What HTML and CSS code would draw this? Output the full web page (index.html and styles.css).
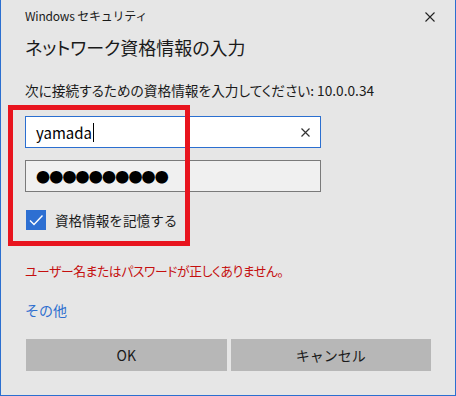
FILE: index.html
```html
<!DOCTYPE html>
<html lang="ja">
<head>
    <meta charset="UTF-8">
    <title>Windows セキュリティ</title>
    <link rel="stylesheet" href="styles.css">
</head>
<body>
    <div class="window">
        <div class="title-bar">
            <span class="title">Windows セキュリティ</span>
            <span class="close">
                <svg viewBox="0 0 10 10"><path d="M0.5 0.5L9.5 9.5M9.5 0.5L0.5 9.5"></path></svg>
            </span>
        </div>

        <h1>ネットワーク資格情報の入力</h1>
        <p class="prompt">次に接続するための資格情報を入力してください: 10.0.0.34</p>

        <div class="field focused">
            <span class="value">yamada</span><span class="caret"></span>
            <span class="clear">
                <svg viewBox="0 0 9 9"><path d="M0.5 0.5L8.5 8.5M8.5 0.5L0.5 8.5"></path></svg>
            </span>
        </div>
        <div class="field password">
            <span class="dots">●●●●●●●●●●</span>
        </div>

        <label class="remember">
            <span class="checkbox">
                <svg viewBox="0 0 20 20"><path d="M4 10.5L8 14.5L16.5 5.5"></path></svg>
            </span>
            資格情報を記憶する
        </label>

        <p class="error">ユーザー名またはパスワードが正しくありません。</p>
        <a class="more" href="#">その他</a>

        <div class="buttons">
            <button type="button">OK</button>
            <button type="button">キャンセル</button>
        </div>

        <div class="highlight"></div>
    </div>
</body>
</html>
```

FILE: styles.css
```css
body {
    margin: 0;
    font-family: "Noto Sans CJK JP", sans-serif;
    color: #000;
}

.window {
    position: relative;
    width: 456px;
    height: 396px;
    box-sizing: border-box;
    background-color: #e6e6e6;
    border: 1px solid #2b6fd0;
    border-top: none;
    padding: 0 24px 0 24px;
}

.title-bar {
    display: flex;
    justify-content: space-between;
    align-items: center;
    height: 32px;
}

.title {
    font-size: 12px;
    color: #1a1a1a;
    margin-top: -2px;
    letter-spacing: -0.2px;
}

.close {
    display: flex;
    margin-right: -4px;
    margin-top: 2px;
}

.close svg {
    width: 10px;
    height: 10px;
    stroke: #222;
    stroke-width: 1.1;
}

h1 {
    margin: 1px 0 0 0;
    font-size: 18px;
    font-weight: normal;
    line-height: 28px;
    color: #1a1a1a;
    font-feature-settings: "palt";
}

.prompt {
    margin: 19px 0 0 0;
    font-size: 13.7px;
    line-height: 20px;
    color: #1a1a1a;
    font-feature-settings: "palt";
}

.field {
    display: flex;
    align-items: center;
    box-sizing: border-box;
    width: 296px;
    height: 32px;
    padding: 0 10px;
    margin-top: 12px;
    border: 1px solid #7a7a7a;
    background-color: #f0f0f0;
    font-size: 15px;
}

.field.focused {
    margin-top: 16px;
    border-color: #2b6fd0;
    background-color: #fff;
}

.value {
    color: #000;
}

.caret {
    width: 1px;
    height: 19px;
    background-color: #000;
    margin-left: 1px;
}

.clear {
    display: flex;
    margin-left: auto;
    margin-right: 0;
}

.clear svg {
    width: 9px;
    height: 9px;
    stroke: #333;
    stroke-width: 1.2;
}

.dots {
    font-size: 14px;
    letter-spacing: -0.8px;
    color: #000;
}

.remember {
    display: flex;
    align-items: center;
    gap: 9px;
    margin-top: 18px;
    font-size: 13.6px;
    color: #1a1a1a;
}

.checkbox {
    display: flex;
    width: 20px;
    height: 20px;
    margin-left: 1px;
    background-color: #2d6fd2;
}

.checkbox svg {
    width: 20px;
    height: 20px;
    fill: none;
    stroke: #fff;
    stroke-width: 1.4;
}

.error {
    margin: 31px 0 0 0;
    font-size: 12.8px;
    line-height: 20px;
    color: #c50f0f;
    letter-spacing: -0.38px;
    font-feature-settings: "palt";
}

.more {
    display: block;
    margin-top: 19px;
    font-size: 14px;
    line-height: 20px;
    color: #2f6fcf;
    text-decoration: none;
}

.buttons {
    display: flex;
    gap: 4px;
    margin-top: 19px;
    margin-left: 1px;
}

button {
    width: 201px;
    height: 32px;
    border: none;
    background-color: #b7b7b7;
    font-family: "Noto Sans CJK JP", sans-serif;
    font-size: 14px;
    color: #1a1a1a;
    padding: 0;
}

/* annotation box drawn over the form */
.highlight {
    position: absolute;
    left: 7px;
    top: 105px;
    width: 172px;
    height: 131px;
    border: 5px solid #e8141e;
}
```
